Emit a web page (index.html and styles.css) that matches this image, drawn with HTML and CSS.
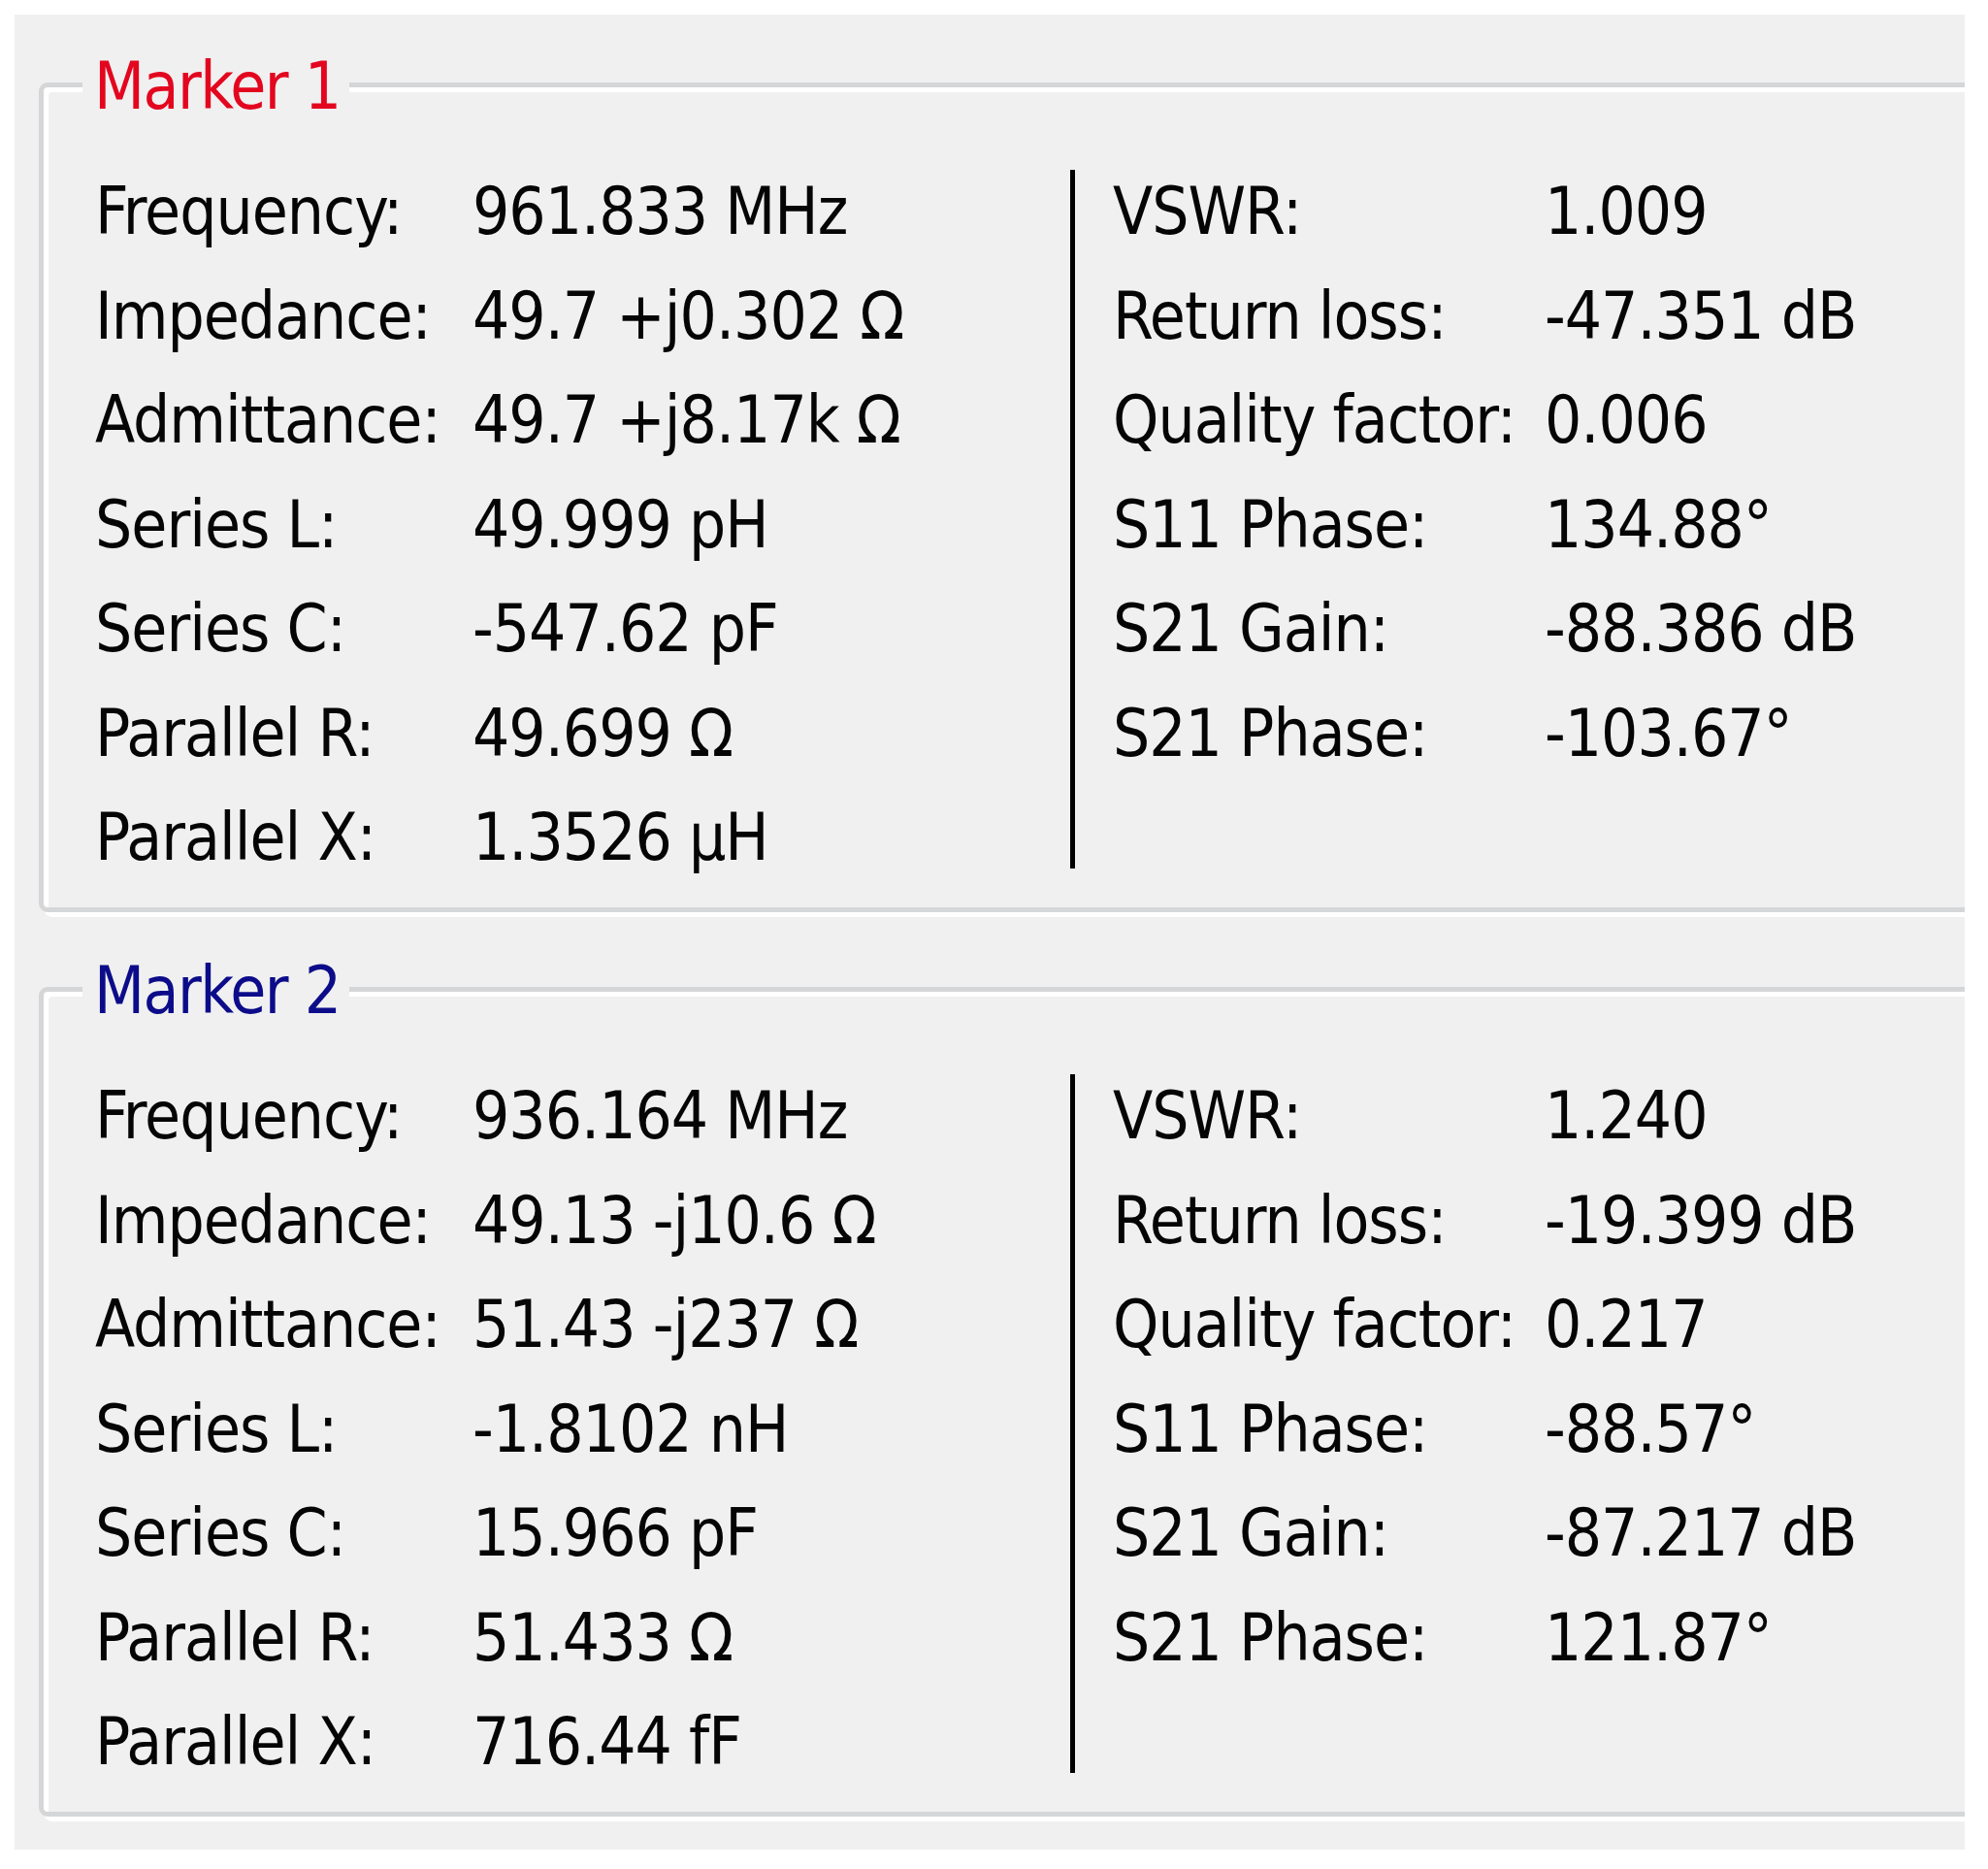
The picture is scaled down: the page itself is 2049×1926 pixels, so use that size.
FILE: index.html
```html
<!DOCTYPE html>
<html lang="en">
<head>
<meta charset="utf-8">
<title>Markers</title>
<link rel="stylesheet" href="styles.css">
</head>
<body>
<div class="panel">
  <section class="group">
    <span class="legend red">Marker 1</span>
    <div class="cols">
      <div class="col left">
        <span>Frequency:</span><span>961.833 MHz</span>
        <span>Impedance:</span><span>49.7 +j0.302 Ω</span>
        <span>Admittance:</span><span>49.7 +j8.17k Ω</span>
        <span>Series L:</span><span>49.999 pH</span>
        <span>Series C:</span><span>-547.62 pF</span>
        <span>Parallel R:</span><span>49.699 Ω</span>
        <span>Parallel X:</span><span>1.3526 μH</span>
      </div>
      <div class="divider"></div>
      <div class="col right">
        <span>VSWR:</span><span>1.009</span>
        <span>Return loss:</span><span>-47.351 dB</span>
        <span>Quality factor:</span><span>0.006</span>
        <span>S11 Phase:</span><span>134.88°</span>
        <span>S21 Gain:</span><span>-88.386 dB</span>
        <span>S21 Phase:</span><span>-103.67°</span>
      </div>
    </div>
  </section>
  <section class="group second">
    <span class="legend blue">Marker 2</span>
    <div class="cols">
      <div class="col left">
        <span>Frequency:</span><span>936.164 MHz</span>
        <span>Impedance:</span><span>49.13 -j10.6 Ω</span>
        <span>Admittance:</span><span>51.43 -j237 Ω</span>
        <span>Series L:</span><span>-1.8102 nH</span>
        <span>Series C:</span><span>15.966 pF</span>
        <span>Parallel R:</span><span>51.433 Ω</span>
        <span>Parallel X:</span><span>716.44 fF</span>
      </div>
      <div class="divider"></div>
      <div class="col right">
        <span>VSWR:</span><span>1.240</span>
        <span>Return loss:</span><span>-19.399 dB</span>
        <span>Quality factor:</span><span>0.217</span>
        <span>S11 Phase:</span><span>-88.57°</span>
        <span>S21 Gain:</span><span>-87.217 dB</span>
        <span>S21 Phase:</span><span>121.87°</span>
      </div>
    </div>
  </section>
</div>
</body>
</html>
```
FILE: styles.css
```css
html, body {
  margin: 0;
  padding: 0;
  background: #ffffff;
}

body {
  font-family: "DejaVu Sans Condensed", "DejaVu Sans", sans-serif;
  font-stretch: condensed;
  font-size: 67px;
  letter-spacing: -1px;
  color: #050505;
}

.panel {
  margin: 15px 0 0 15px;
  width: 2010px;
  height: 1891px;
  background: #f0f0f0;
  overflow: hidden;
}

.group {
  position: relative;
  margin: 70px -40px 0 25px;
  height: 855px;
  box-sizing: border-box;
  border: 5px solid #d5d6d7;
  border-radius: 9px;
  box-shadow: inset 5px 5px 0 #ffffff, 5px 5px 0 #ffffff;
  padding: 75px 0 0 53px;
}

.group.second {
  margin-top: 77px;
}

.legend {
  position: absolute;
  top: -36px;
  left: 40px;
  padding: 0 9px 0 12px;
  line-height: 70px;
  letter-spacing: -1.5px;
  background: #f0f0f0;
}

.red { color: #e3061f; }
.blue { color: #0c0c8a; }

.cols {
  display: flex;
  align-items: flex-start;
}

.col {
  display: grid;
  grid-auto-rows: 107.5px;
  line-height: 107.5px;
  white-space: nowrap;
}

.col.left {
  width: 1005px;
  grid-template-columns: 389px auto;
}

.col.right {
  margin-left: 39px;
  grid-template-columns: 445px auto;
}

.divider {
  width: 5px;
  height: 720px;
  margin-top: 10px;
  background: #000000;
  flex: none;
}
```
